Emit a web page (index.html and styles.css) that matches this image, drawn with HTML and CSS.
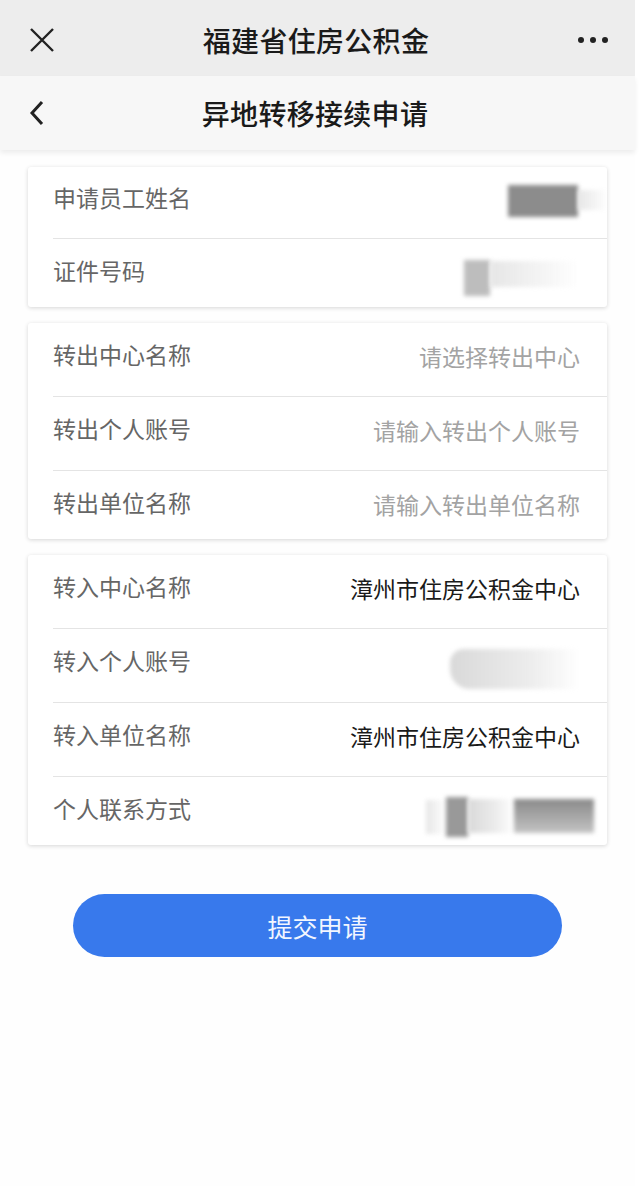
FILE: index.html
```html
<!DOCTYPE html>
<html lang="zh-CN">

<head>
    <meta charset="UTF-8">
    <meta name="viewport" content="width=device-width, initial-scale=1.0">
    <title>福建省住房公积金</title>
    <link rel="stylesheet" href="styles.css">
</head>

<body>
    <div class="page">
        <div class="topbar">
            <svg class="icon-close" width="24" height="24" viewBox="0 0 24 24">
                <path d="M1 1 L23 23 M23 1 L1 23" stroke="#222" stroke-width="2.4" fill="none" />
            </svg>
            <div class="title">福建省住房公积金</div>
            <div class="icon-more"><i></i><i></i><i></i></div>
        </div>

        <div class="subbar">
            <svg class="icon-back" width="16" height="26" viewBox="0 0 16 26">
                <path d="M13 2 L3 13 L13 24" stroke="#222" stroke-width="3" fill="none" stroke-linejoin="miter" />
            </svg>
            <div class="title">异地转移接续申请</div>
            <div class="spacer"></div>
        </div>

        <div class="content">
            <div class="card">
                <div class="row first">
                    <span class="label">申请员工姓名</span>
                    <span class="value">
                        <span class="smudge dark name-a"></span>
                        <span class="smudge faint name-b"></span>
                    </span>
                </div>
                <div class="row">
                    <span class="label">证件号码</span>
                    <span class="value">
                        <span class="smudge mid id-a"></span>
                        <span class="smudge faint id-b"></span>
                    </span>
                </div>
            </div>

            <div class="card">
                <div class="row">
                    <span class="label">转出中心名称</span>
                    <span class="value placeholder">请选择转出中心</span>
                </div>
                <div class="row">
                    <span class="label">转出个人账号</span>
                    <span class="value placeholder">请输入转出个人账号</span>
                </div>
                <div class="row">
                    <span class="label">转出单位名称</span>
                    <span class="value placeholder">请输入转出单位名称</span>
                </div>
            </div>

            <div class="card">
                <div class="row">
                    <span class="label">转入中心名称</span>
                    <span class="value">漳州市住房公积金中心</span>
                </div>
                <div class="row">
                    <span class="label">转入个人账号</span>
                    <span class="value">
                        <span class="smudge light acct-a"></span>
                    </span>
                </div>
                <div class="row">
                    <span class="label">转入单位名称</span>
                    <span class="value">漳州市住房公积金中心</span>
                </div>
                <div class="row">
                    <span class="label">个人联系方式</span>
                    <span class="value">
                        <span class="smudge faint tel-a"></span>
                        <span class="smudge dark tel-b"></span>
                        <span class="smudge light tel-c"></span>
                        <span class="smudge dark tel-d"></span>
                    </span>
                </div>
            </div>

            <div class="actions">
                <button class="submit">提交申请</button>
            </div>
        </div>
    </div>
</body>

</html>
```

FILE: styles.css
```css
body {
    margin: 0;
    background: #fff;
    font-family: "Noto Sans CJK SC", "Noto Sans", sans-serif;
    overflow: hidden;
}

.page {
    width: 635px;
    min-height: 1186px;
    background: #fefefe;
}

.topbar {
    height: 76px;
    background: #ededed;
    display: flex;
    align-items: center;
    padding: 4px 27px 0 30px;
    box-sizing: border-box;
}

.subbar {
    height: 74px;
    background: #f7f7f7;
    display: flex;
    align-items: center;
    padding: 0 27px 0 22px;
    box-sizing: border-box;
    box-shadow: 0 3px 5px rgba(0, 0, 0, 0.07);
    position: relative;
}

.title {
    flex: 1;
    text-align: center;
    font-size: 28px;
    font-weight: 500;
    color: #1a1a1a;
    letter-spacing: 0.3px;
}

.icon-close {
    width: 24px;
    flex: none;
}

.icon-back {
    width: 30px;
    flex: none;
}

.spacer {
    width: 30px;
}

.icon-more {
    width: 30px;
    display: flex;
    justify-content: space-between;
}

.icon-more i {
    width: 6px;
    height: 6px;
    border-radius: 50%;
    background: #222;
}

.content {
    width: 579px;
    margin-left: 28px;
    padding-top: 17px;
}

.card {
    background: #fff;
    border-radius: 3px;
    box-shadow: 0 1px 4px rgba(0, 0, 0, 0.16);
    margin-bottom: 16px;
}

.row {
    display: flex;
    justify-content: space-between;
    align-items: center;
    margin-left: 25px;
    padding: 18px 27px 29px 0;
    border-bottom: 1px solid #e4e4e4;
    height: 26px;
}

.row.first {
    padding-top: 17px;
    padding-bottom: 28px;
}

.row:last-child {
    border-bottom: none;
    padding-bottom: 24px;
}

.label {
    font-size: 23px;
    color: #666;
    line-height: 26px;
}

.value {
    font-size: 23px;
    color: #1a1a1a;
    line-height: 26px;
    display: flex;
    align-items: center;
    padding-top: 3px;
}

.placeholder {
    color: #a3a3a3;
}

.smudge {
    display: inline-block;
    filter: blur(2px);
}

.dark {
    background: #8c8c8c;
}

.mid {
    background: #bdbdbd;
}

.light {
    background: linear-gradient(90deg, #d9d9d9, #ececec 60%, rgba(240, 240, 240, 0));
}

.faint {
    background: linear-gradient(90deg, #e6e6e6, rgba(240, 240, 240, 0));
}

.name-a {
    width: 70px;
    height: 32px;
    margin-top: 4px;
}

.name-b {
    width: 30px;
    height: 20px;
    margin-right: -28px;
    margin-top: 2px;
}

.id-a {
    width: 26px;
    height: 36px;
    margin-top: 12px;
}

.id-b {
    width: 90px;
    height: 26px;
    margin-top: 4px;
}

.acct-a {
    width: 130px;
    height: 40px;
    margin-top: 14px;
    border-radius: 14px 0 0 20px;
}

.tel-a {
    width: 20px;
    height: 34px;
    margin-top: 14px;
}

.tel-b {
    width: 22px;
    height: 40px;
    margin-top: 14px;
    background: #999;
}

.tel-c {
    width: 46px;
    height: 34px;
    margin-top: 12px;
}

.tel-d {
    width: 80px;
    height: 34px;
    margin-top: 12px;
    background: linear-gradient(180deg, #8a8a8a, #a6a6a6 50%, #c4c4c4);
    margin-right: -14px;
}

.actions {
    padding: 33px 18px 0 45px;
}

.submit {
    width: 489px;
    height: 63px;
    border: none;
    border-radius: 32px;
    background: #3879ec;
    color: #f2f6ff;
    font-family: "Noto Sans CJK SC", sans-serif;
    font-size: 25px;
    cursor: pointer;
}
```
